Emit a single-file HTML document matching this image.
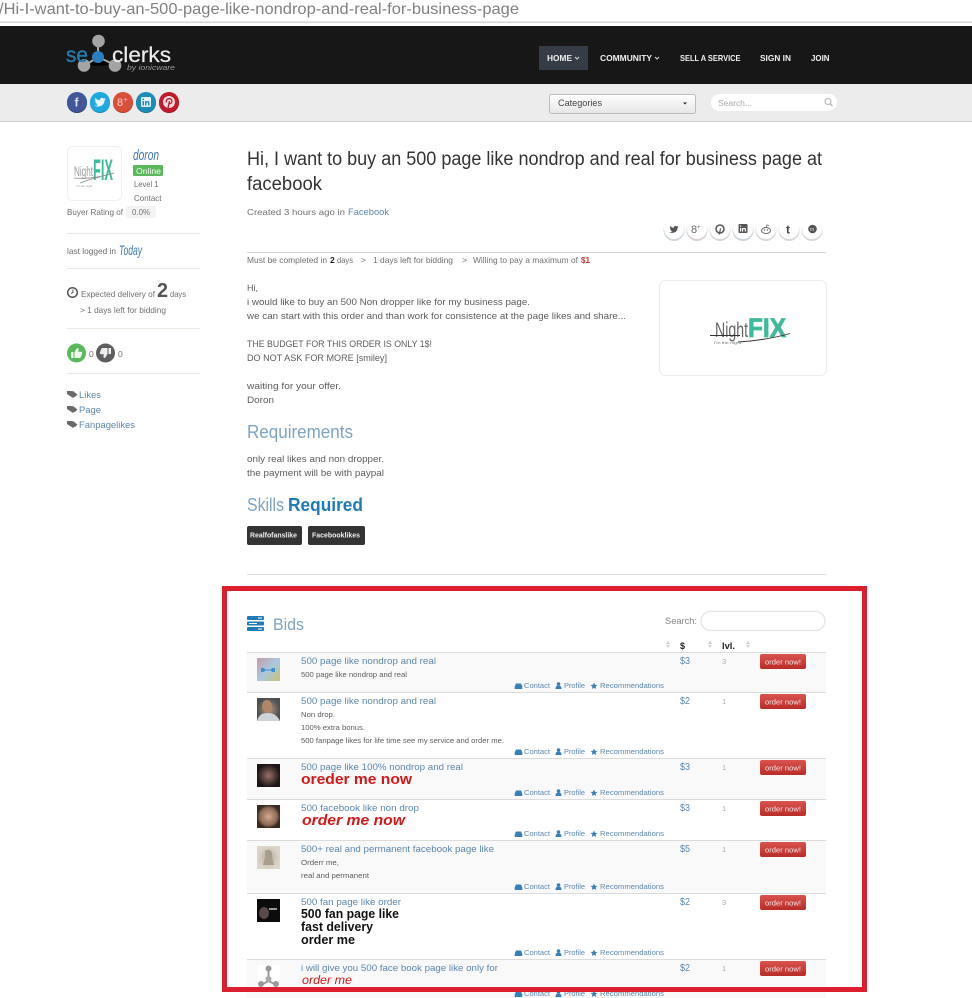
<!DOCTYPE html>
<html lang="en"><head><meta charset="utf-8"><title>Bid request</title>
<style>
html,body{margin:0;padding:0;background:#fff;width:972px;height:998px;overflow:hidden}
svg{display:block;position:absolute;left:0;top:0;filter:blur(.35px)}
text{font-family:"Liberation Sans",sans-serif;white-space:pre}
.b{fill:#5c5c5c;font-size:9.5px}
.s{fill:#707070;font-size:8.5px}
.l{fill:#5d87ad;font-size:9.5px}
.t{fill:#5d87ad;font-size:9.5px}
.d{fill:#5c5c5c;font-size:7.5px}
.k{fill:#5d87ad;font-size:7.5px}
.p{fill:#5d87ad;font-size:10.5px}
.v{fill:#aaa;font-size:7.5px}
.o{fill:#f6e4e4;font-size:7.5px}
.n{fill:#f0f0f0;font-size:8.5px;font-weight:bold}
.h{fill:#7fa3c2;font-size:18px}
.r{fill:#d01818;font-size:14.5px;font-weight:bold}
.m{fill:#111;font-size:12.5px;font-weight:bold}
</style></head><body>
<svg width="972" height="998" viewBox="0 0 972 998" xmlns="http://www.w3.org/2000/svg">
<defs>
<linearGradient id="rb" x1="0" y1="0" x2="0" y2="1"><stop offset="0" stop-color="#d9534f"/><stop offset="1" stop-color="#b92c28"/></linearGradient>
<linearGradient id="cb" x1="0" y1="0" x2="0" y2="1"><stop offset="0" stop-color="#fff"/><stop offset="1" stop-color="#e6e6e6"/></linearGradient>
<linearGradient id="a1" x1="0" y1="0" x2="1" y2="1"><stop offset="0" stop-color="#c99aa8"/><stop offset=".5" stop-color="#a9c8e0"/><stop offset="1" stop-color="#c8c070"/></linearGradient>
<radialGradient id="a2"><stop offset="0" stop-color="#c09a80"/><stop offset="1" stop-color="#4a4f50"/></radialGradient>
<radialGradient id="a3"><stop offset="0" stop-color="#9a7068"/><stop offset="1" stop-color="#1c1516"/></radialGradient>
<radialGradient id="a4"><stop offset="0" stop-color="#d8a890"/><stop offset=".75" stop-color="#8a6a55"/><stop offset="1" stop-color="#3a2a20"/></radialGradient>
<radialGradient id="a5"><stop offset="0" stop-color="#b8ad9c"/><stop offset="1" stop-color="#dcd6ca"/></radialGradient>
<g id="btn"><rect width="46" height="15" rx="2" fill="url(#rb)"/><text class="o" x="5" y="10.5" textLength="36" lengthAdjust="spacingAndGlyphs">order now!</text></g>
<g id="ic">
<path d="M516 -4.5h5l1.300 3v2.500h-7.600v-2.500z" fill="#3a7fb5"/>
<circle cx="558.500" cy="-4" r="1.800" fill="#3a7fb5"/><path d="M555.500 1c0-2.800 1.200-3.400 3-3.400s3 .6 3 3.400z" fill="#3a7fb5"/>
<path d="M594 -5.500l1 2.200 2.400.3-1.800 1.600.5 2.400-2.100-1.200-2.100 1.200.5-2.400-1.800-1.600 2.400-.3z" fill="#3a7fb5"/>
</g>
<g id="sort" fill="#cfcfcf"><path d="M-2 -1l2-3 2 3z"/><path d="M-2 0l2 3 2-3z"/></g>
<g id="tag" fill="#6a6a6a"><path d="M0 -3.500h4.500l5 3.500-3.500 3.500-6-4z"/><path d="M6 -3.500l4.500 3.500-2.500 2.500-1.500-.5 2-2-3.500-3.500z"/></g>
</defs>

<rect width="972" height="998" fill="#fff"/>
<!-- address bar -->
<text x="-1" y="14" fill="#808080" font-size="16" textLength="520" lengthAdjust="spacingAndGlyphs">/Hi-I-want-to-buy-an-500-page-like-nondrop-and-real-for-business-page</text>
<rect y="21.500" width="972" height="1.500" fill="#d6d6d6"/>
<!-- header -->
<rect y="26" width="972" height="58" fill="#171717"/>
<rect y="84" width="972" height="37" fill="#ececec"/>
<rect y="121" width="972" height="1" fill="#cdcdcd"/>
<!-- seoclerks logo -->
<g stroke="#a8a8a8" stroke-width="2"><path d="M98 41V57M84 66L98 57L115 65"/></g>
<circle cx="98.500" cy="41" r="6.300" fill="#a4a4a4"/><circle cx="84" cy="65.500" r="6.300" fill="#a4a4a4"/><circle cx="115" cy="65.500" r="6.300" fill="#a4a4a4"/>
<circle cx="98" cy="57" r="6" fill="#2a7fc0"/>
<text x="66" y="62" fill="#2a79b2" stroke="#2a79b2" stroke-width=".4" font-size="21" textLength="22" lengthAdjust="spacingAndGlyphs">se</text>
<text x="112" y="62" fill="#ececec" stroke="#ececec" stroke-width=".2" font-size="21" textLength="59" lengthAdjust="spacingAndGlyphs">clerks</text>
<text x="127" y="70" fill="#999" font-size="7" font-style="italic" textLength="48" lengthAdjust="spacingAndGlyphs">by ionicware</text>
<!-- nav -->
<rect x="539" y="46" width="49" height="24" fill="#353c45"/>
<text class="n" x="547" y="61" textLength="25" lengthAdjust="spacingAndGlyphs">HOME</text>
<path d="M575 57l2 2 2-2" fill="none" stroke="#ddd"/>
<text class="n" x="600" y="61" textLength="52" lengthAdjust="spacingAndGlyphs">COMMUNITY</text>
<path d="M655 57l2 2 2-2" fill="none" stroke="#ddd"/>
<text class="n" x="680" y="61" textLength="60.500" lengthAdjust="spacingAndGlyphs">SELL A SERVICE</text>
<text class="n" x="760" y="61" textLength="31" lengthAdjust="spacingAndGlyphs">SIGN IN</text>
<text class="n" x="811" y="61" textLength="18.500" lengthAdjust="spacingAndGlyphs">JOIN</text>
<!-- social -->
<g>
<circle cx="77" cy="103" r="10" fill="#2c3f70"/><circle cx="77" cy="102" r="10" fill="#41579a"/>
<circle cx="100" cy="103" r="10" fill="#158ab8"/><circle cx="100" cy="102" r="10" fill="#1fa9df"/>
<circle cx="123" cy="103" r="10" fill="#b03d2c"/><circle cx="123" cy="102" r="10" fill="#d9503a"/>
<circle cx="146" cy="103" r="10" fill="#146f90"/><circle cx="146" cy="102" r="10" fill="#1d8db5"/>
<circle cx="169" cy="103" r="10" fill="#9a1320"/><circle cx="169" cy="102" r="10" fill="#c31a2a"/>
</g>
<text x="74.500" y="106.500" fill="#dfe5f2" font-size="12" font-weight="bold">f</text>
<path d="M94 105.500c4 2.500 10.500.5 10.500-5l1.500-1.500-1.700.3.900-1.500-1.600.8c-1.500-1.500-4-.4-3.500 1.700-2 0-3.500-1-4.700-2.300-.6 1.200-.3 2.500.7 3.200l-1-.2c0 1.200.8 2 2 2.400h-1c.3.900 1.100 1.500 2.200 1.500-1 .7-2.200 1-3.300.6z" fill="#eaf6fc"/>
<text x="117" y="106" fill="#f3d4ce" font-size="11" font-family="Liberation Serif">8</text><text x="123.500" y="102" fill="#f3d4ce" font-size="7">+</text>
<rect x="141" y="97" width="10" height="10" rx="1.500" fill="#e4f1f6"/><path d="M142.500 101h1.500v4.500h-1.500zM142.500 98.500h1.500v1.500h-1.500zM145 101h1.400v.7c.8-1.200 3.100-1 3.100 1.200v2.600H148v-2.300c0-1.300-1.500-1.200-1.500 0v2.300H145z" fill="#1d8db5"/>
<circle cx="169" cy="102" r="6" fill="#f6dfe1"/><path d="M168 108l1.500-7M166.500 102.500c-1-2.500 1-4 3-3.800 2.300.2 3 2.300 2 4-.8 1.300-2.500 1.200-2.800.3" fill="none" stroke="#c31a2a" stroke-width="1.300"/>
<!-- categories + search -->
<rect x="549.500" y="94.500" width="146" height="19" rx="2" fill="url(#cb)" stroke="#bdbdbd"/>
<text x="558" y="106" fill="#444" font-size="9.500" textLength="44" lengthAdjust="spacingAndGlyphs">Categories</text>
<path d="M683 102.500h4l-2 2z" fill="#222"/>
<rect x="711" y="94" width="126" height="17" rx="8.500" fill="#fff"/>
<text x="718" y="106" fill="#aaa" font-size="8.500" textLength="34" lengthAdjust="spacingAndGlyphs">Search...</text>
<circle cx="828" cy="101.500" r="3" fill="none" stroke="#b5b5b5" stroke-width="1.100"/><path d="M830.200 103.700l2.300 2.300" stroke="#b5b5b5" stroke-width="1.300"/>

<!-- sidebar -->
<rect x="67.500" y="146.500" width="54" height="54" rx="5" fill="#fff" stroke="#f0f0f0"/>
<text x="74" y="176" fill="#9a9a9a" font-size="14" font-family="Liberation Serif" textLength="19" lengthAdjust="spacingAndGlyphs">Night</text>
<text x="93" y="180" fill="#3dbb9b" font-size="30" font-weight="bold" textLength="20" lengthAdjust="spacingAndGlyphs">FIX</text>
<path d="M74 178c10 1 24 0 40-5M80 183c8-3 14-5 20-6" fill="none" stroke="#888" stroke-width=".8"/>
<text x="76" y="187" fill="#999" font-size="3">I'm the night</text>
<text x="133" y="160" fill="#3f78ad" font-size="15" font-family="Liberation Serif" font-style="italic" textLength="26" lengthAdjust="spacingAndGlyphs">doron</text>
<rect x="133" y="165" width="30" height="11" rx="1.500" fill="#5cb85c"/>
<text x="136" y="174" fill="#f2fbf2" font-size="8.500" textLength="25" lengthAdjust="spacingAndGlyphs">Online</text>
<text class="s" x="134" y="187" textLength="24.500" lengthAdjust="spacingAndGlyphs">Level 1</text>
<text class="s" x="134" y="201" textLength="27.500" lengthAdjust="spacingAndGlyphs">Contact</text>
<text class="s" x="67" y="215" textLength="56" lengthAdjust="spacingAndGlyphs">Buyer Rating of</text>
<rect x="126" y="206" width="30" height="12" rx="3" fill="#f3f3f3"/>
<text class="s" x="132" y="215" textLength="18" lengthAdjust="spacingAndGlyphs">0.0%</text>
<rect x="67" y="233" width="133" height="1" fill="#eae8e0"/>
<text class="s" x="67" y="254" textLength="49" lengthAdjust="spacingAndGlyphs">last logged in</text>
<text x="119" y="255" fill="#3f78ad" font-size="14" font-family="Liberation Serif" font-style="italic" textLength="23" lengthAdjust="spacingAndGlyphs">Today</text>
<rect x="67" y="268" width="133" height="1" fill="#eae8e0"/>
<circle cx="72.500" cy="292.500" r="4.800" fill="none" stroke="#555" stroke-width="1.500"/><path d="M73 289.500v3l-2 1" fill="none" stroke="#555"/>
<text class="s" x="81" y="297" textLength="74" lengthAdjust="spacingAndGlyphs">Expected delivery of</text>
<text x="157" y="297" fill="#555" font-size="20" font-weight="bold" textLength="11" lengthAdjust="spacingAndGlyphs">2</text>
<text class="s" x="170" y="297" textLength="16" lengthAdjust="spacingAndGlyphs">days</text>
<text class="s" x="80" y="313" textLength="86" lengthAdjust="spacingAndGlyphs">&gt; 1 days left for bidding</text>
<rect x="67" y="328" width="133" height="1" fill="#eae8e0"/>
<circle cx="76.500" cy="353" r="9.500" fill="#5cb85c"/>
<path d="M71 352h2.500v6H71zM74.500 352l2.500-4c1.300 0 1.800 1 1.500 2.500l-.4 1.300h3c1 0 1.300 1 .9 1.800l-1.200 3.400c-.2.600-.7 1-1.400 1h-4.900z" fill="#eef8ee"/>
<text class="s" x="89" y="357">0</text>
<circle cx="105.500" cy="353" r="9.500" fill="#5e5e60"/>
<path d="M111 354h-2.500v-6H111zM107.500 354l-2.500 4c-1.300 0-1.800-1-1.500-2.500l.4-1.300h-3c-1 0-1.300-1-.9-1.800l1.200-3.400c.2-.6.700-1 1.400-1h4.900z" fill="#eee"/>
<text class="s" x="118" y="357">0</text>
<rect x="67" y="373" width="133" height="1" fill="#eae8e0"/>
<use href="#tag" x="67" y="394.500"/><use href="#tag" x="67" y="409.500"/><use href="#tag" x="67" y="424.500"/>
<text class="l" x="79" y="398" textLength="22" lengthAdjust="spacingAndGlyphs">Likes</text>
<text class="l" x="79" y="413" textLength="22" lengthAdjust="spacingAndGlyphs">Page</text>
<text class="l" x="79" y="428" textLength="56" lengthAdjust="spacingAndGlyphs">Fanpagelikes</text>

<!-- main title -->
<text x="247" y="165" fill="#333" font-size="19" textLength="575" lengthAdjust="spacingAndGlyphs">Hi, I want to buy an 500 page like nondrop and real for business page at</text>
<text x="247" y="190" fill="#333" font-size="19" textLength="75" lengthAdjust="spacingAndGlyphs">facebook</text>
<text class="s" x="247" y="215" font-size="9" textLength="98" lengthAdjust="spacingAndGlyphs">Created 3 hours ago in</text>
<text class="l" x="348" y="215" textLength="41" lengthAdjust="spacingAndGlyphs">Facebook</text>
<!-- share -->
<g>
<circle cx="674" cy="230.500" r="10.500" fill="#cfd8dc"/><circle cx="697" cy="230.500" r="10.500" fill="#dccfcf"/><circle cx="720" cy="230.500" r="10.500" fill="#d8d8d8"/><circle cx="743" cy="230.500" r="10.500" fill="#c8d6de"/><circle cx="766" cy="230.500" r="10.500" fill="#d8d8d8"/><circle cx="789" cy="230.500" r="10.500" fill="#d8d8d8"/><circle cx="812" cy="230.500" r="10.500" fill="#d8d8d8"/>
<g fill="#fff"><circle cx="674" cy="229" r="10"/><circle cx="697" cy="229" r="10"/><circle cx="720" cy="229" r="10"/><circle cx="743" cy="229" r="10"/><circle cx="766" cy="229" r="10"/><circle cx="789" cy="229" r="10"/><circle cx="812" cy="229" r="10"/></g>
</g>
<path d="M669 232c3.500 2 8.500.5 8.500-4l1.200-1.200-1.400.2.800-1.200-1.300.6c-1.200-1.200-3.200-.3-2.800 1.400-1.600 0-2.800-.8-3.800-1.800-.5 1-.2 2 .6 2.600l-.8-.2c0 1 .6 1.600 1.600 2h-.8c.2.700.9 1.200 1.800 1.200-.8.500-1.700.7-2.600.4z" fill="#555"/>
<text x="691" y="233" fill="#666" font-size="11" font-family="Liberation Serif">8</text><text x="697" y="229" fill="#666" font-size="6">+</text>
<circle cx="720" cy="229" r="4" fill="none" stroke="#555" stroke-width="1.500"/><path d="M719.300 234.500l1.200-6" stroke="#555" stroke-width="1.200"/>
<rect x="738.500" y="224" width="9" height="9" rx="1" fill="#555"/><path d="M740 228h1.200v3.500H740zM740 225.500h1.200v1.200H740zM742 228h1.200v.5c.8-1 2.800-.8 2.800 1v2h-1.200v-1.800c0-1.100-1.600-1-1.600 0v1.800H742z" fill="#fff"/>
<ellipse cx="766" cy="230.500" rx="4.500" ry="3" fill="none" stroke="#666"/><circle cx="764.500" cy="230" r=".8" fill="#666"/><circle cx="767.500" cy="230" r=".8" fill="#666"/><path d="M766 227.500l1-2.500 2 .5" fill="none" stroke="#666" stroke-width=".8"/>
<text x="786" y="233.500" fill="#444" font-size="12" font-weight="bold">t</text>
<circle cx="812.500" cy="229" r="4.300" fill="#555"/><text x="809.800" y="231" fill="#ddd" font-size="5.500">m</text>
<!-- info line -->
<rect x="247" y="252" width="579" height="1" fill="#d4d4d4"/>
<text class="s" x="247" y="263" textLength="80" lengthAdjust="spacingAndGlyphs">Must be completed in</text>
<text x="330" y="263" fill="#222" font-size="8.500" font-weight="bold">2</text>
<text class="s" x="337" y="263" textLength="16" lengthAdjust="spacingAndGlyphs">days</text>
<text class="s" x="361" y="263">&gt;</text>
<text class="s" x="373" y="263" textLength="80" lengthAdjust="spacingAndGlyphs">1 days left for bidding</text>
<text class="s" x="462" y="263">&gt;</text>
<text class="s" x="473" y="263" textLength="105" lengthAdjust="spacingAndGlyphs">Willing to pay a maximum of</text>
<text x="581" y="263" fill="#c0392b" font-size="8.500" font-weight="bold" textLength="9" lengthAdjust="spacingAndGlyphs">$1</text>
<!-- body -->
<text class="b" x="247" y="291" textLength="11" lengthAdjust="spacingAndGlyphs">Hi,</text>
<text class="b" x="247" y="305" textLength="283" lengthAdjust="spacingAndGlyphs">i would like to buy an 500 Non dropper like for my business page.</text>
<text class="b" x="247" y="319" textLength="379" lengthAdjust="spacingAndGlyphs">we can start with this order and than work for consistence at the page likes and share...</text>
<text class="b" x="247" y="347" textLength="185" lengthAdjust="spacingAndGlyphs">THE BUDGET FOR THIS ORDER IS ONLY 1$!</text>
<text class="b" x="247" y="361" textLength="140" lengthAdjust="spacingAndGlyphs">DO NOT ASK FOR MORE [smiley]</text>
<text class="b" x="247" y="389" textLength="94" lengthAdjust="spacingAndGlyphs">waiting for your offer.</text>
<text class="b" x="247" y="403" textLength="27" lengthAdjust="spacingAndGlyphs">Doron</text>
<!-- image card -->
<rect x="659.500" y="280.500" width="167" height="95" rx="6" fill="#fff" stroke="#ececec"/>
<text x="715" y="337" fill="#666" font-size="21" font-family="Liberation Serif" textLength="33" lengthAdjust="spacingAndGlyphs">Night</text>
<text x="748" y="337" fill="#3dbb9b" stroke="#3dbb9b" stroke-width=".8" font-size="27" font-weight="bold" textLength="38" lengthAdjust="spacingAndGlyphs">FIX</text>
<path d="M710 335.500h30M738 342c18-1 36-4 52-8.500" fill="none" stroke="#333" stroke-width=".9"/>
<text x="714" y="344" fill="#777" font-size="4" textLength="27" lengthAdjust="spacingAndGlyphs">I'm the night</text>
<!-- requirements -->
<text class="h" x="247" y="438" textLength="106" lengthAdjust="spacingAndGlyphs">Requirements</text>
<text class="b" x="247" y="462" textLength="137" lengthAdjust="spacingAndGlyphs">only real likes and non dropper.</text>
<text class="b" x="247" y="476" textLength="137" lengthAdjust="spacingAndGlyphs">the payment will be with paypal</text>
<text class="h" x="247" y="511" textLength="37" lengthAdjust="spacingAndGlyphs">Skills</text>
<text x="288" y="511" fill="#1f7bb5" font-size="18" font-weight="bold" textLength="75" lengthAdjust="spacingAndGlyphs">Required</text>
<rect x="247" y="526" width="55" height="19" rx="2" fill="#333"/>
<text x="250" y="537.500" fill="#eee" font-size="7.500" font-weight="bold" textLength="47" lengthAdjust="spacingAndGlyphs">Realfofanslike</text>
<rect x="308" y="526" width="57" height="19" rx="2" fill="#333"/>
<text x="312" y="537.500" fill="#eee" font-size="7.500" font-weight="bold" textLength="48" lengthAdjust="spacingAndGlyphs">Facebooklikes</text>
<rect x="247" y="574" width="579" height="1" fill="#dddddd"/>

<!-- bids head -->
<g fill="#1f7bb5"><rect x="247" y="616" width="17" height="4" rx="1"/><rect x="247" y="621.500" width="17" height="4" rx="1"/><rect x="247" y="627" width="17" height="4" rx="1"/></g>
<g fill="#fff"><rect x="258" y="617.500" width="4" height="1"/><rect x="249" y="623" width="8" height="1"/><rect x="258" y="628.500" width="4" height="1"/></g>
<text x="273" y="630" fill="#7fa3c2" font-size="17" textLength="31" lengthAdjust="spacingAndGlyphs">Bids</text>
<text x="665" y="624" fill="#888" font-size="9" textLength="32" lengthAdjust="spacingAndGlyphs">Search:</text>
<rect x="701" y="611.500" width="124" height="19" rx="9.500" fill="#fff" stroke="#e5e5e5" stroke-width="1.300"/>
<use href="#sort" x="668" y="645"/><use href="#sort" x="710" y="645"/><use href="#sort" x="748" y="645"/>
<text x="680" y="649" fill="#222" font-size="9" font-weight="bold">$</text>
<text x="722" y="649" fill="#222" font-size="9" font-weight="bold" textLength="13" lengthAdjust="spacingAndGlyphs">lvl.</text>

<!-- row backgrounds -->
<rect x="247" y="652" width="579" height="40" fill="#f9f9f9"/>
<rect x="247" y="758" width="579" height="41" fill="#f9f9f9"/>
<rect x="247" y="840" width="579" height="53" fill="#f9f9f9"/>
<rect x="247" y="959" width="579" height="39" fill="#f9f9f9"/>
<g fill="#dcdcdc"><rect x="247" y="652" width="579" height="1"/><rect x="247" y="692" width="579" height="1"/><rect x="247" y="758" width="579" height="1"/><rect x="247" y="799" width="579" height="1"/><rect x="247" y="840" width="579" height="1"/><rect x="247" y="893" width="579" height="1"/><rect x="247" y="959" width="579" height="1"/></g>

<!-- avatars -->
<rect x="257" y="658" width="23" height="23" fill="url(#a1)"/><path d="M261 668h3l1 1.500h6l1-1.500h3v4h-3l-1-1.500h-6l-1 1.500h-3z" fill="#3d8fd0"/>
<rect x="257" y="698" width="23" height="23" fill="url(#a2)"/><path d="M257 721c2-7 6-8 11-8s9 2 12 8z" fill="#cdd3d6"/><ellipse cx="267" cy="706" rx="5" ry="6" fill="#b08668"/>
<rect x="257" y="764" width="23" height="23" fill="url(#a3)"/>
<rect x="257" y="805" width="23" height="23" fill="url(#a4)"/>
<rect x="257" y="846" width="23" height="23" fill="url(#a5)"/><path d="M265 851c4-3 8 0 7 5l2 9h-11l2-8z" fill="#a89d8e"/>
<rect x="257" y="899" width="23" height="23" fill="#0c0c0c"/><ellipse cx="264" cy="913" rx="5" ry="6" fill="#5a4a4a"/><rect x="269" y="908" width="8" height="2" fill="#999"/>
<rect x="257" y="965" width="23" height="23" fill="#fff"/>
<path d="M268.500 971v10M261 985l7.500-4 8 4" stroke="#999" stroke-width="2" fill="none"/><circle cx="268.500" cy="968.500" r="3" fill="#999"/><circle cx="268.500" cy="979" r="3" fill="#aaa"/><circle cx="261" cy="984" r="3" fill="#999"/><circle cx="276" cy="984" r="3" fill="#999"/>

<!-- row 1 -->
<text class="t" x="301" y="664" textLength="135" lengthAdjust="spacingAndGlyphs">500 page like nondrop and real</text>
<text class="d" x="301" y="677" textLength="106" lengthAdjust="spacingAndGlyphs">500 page like nondrop and real</text>
<use href="#ic" y="688"/>
<text class="k" x="524" y="688" textLength="26" lengthAdjust="spacingAndGlyphs">Contact</text><text class="k" x="564" y="688" textLength="21" lengthAdjust="spacingAndGlyphs">Profile</text><text class="k" x="600" y="688" textLength="64" lengthAdjust="spacingAndGlyphs">Recommendations</text>
<text class="p" x="680" y="664" textLength="10" lengthAdjust="spacingAndGlyphs">$3</text><text class="v" x="722" y="664">3</text>
<use href="#btn" x="760" y="654"/>
<!-- row 2 -->
<text class="t" x="301" y="704" textLength="135" lengthAdjust="spacingAndGlyphs">500 page like nondrop and real</text>
<text class="d" x="301" y="717" textLength="34" lengthAdjust="spacingAndGlyphs">Non drop.</text>
<text class="d" x="301" y="730" textLength="64" lengthAdjust="spacingAndGlyphs">100% extra bonus.</text>
<text class="d" x="301" y="743" textLength="203" lengthAdjust="spacingAndGlyphs">500 fanpage likes for life time see my service and order me.</text>
<use href="#ic" y="754"/>
<text class="k" x="524" y="754" textLength="26" lengthAdjust="spacingAndGlyphs">Contact</text><text class="k" x="564" y="754" textLength="21" lengthAdjust="spacingAndGlyphs">Profile</text><text class="k" x="600" y="754" textLength="64" lengthAdjust="spacingAndGlyphs">Recommendations</text>
<text class="p" x="680" y="704" textLength="10" lengthAdjust="spacingAndGlyphs">$2</text><text class="v" x="722" y="704">1</text>
<use href="#btn" x="760" y="694"/>
<!-- row 3 -->
<text class="t" x="301" y="770" textLength="162" lengthAdjust="spacingAndGlyphs">500 page like 100% nondrop and real</text>
<text class="r" x="301" y="784" textLength="111" lengthAdjust="spacingAndGlyphs">oreder me now</text>
<use href="#ic" y="795"/>
<text class="k" x="524" y="795" textLength="26" lengthAdjust="spacingAndGlyphs">Contact</text><text class="k" x="564" y="795" textLength="21" lengthAdjust="spacingAndGlyphs">Profile</text><text class="k" x="600" y="795" textLength="64" lengthAdjust="spacingAndGlyphs">Recommendations</text>
<text class="p" x="680" y="770" textLength="10" lengthAdjust="spacingAndGlyphs">$3</text><text class="v" x="722" y="770">1</text>
<use href="#btn" x="760" y="760"/>
<!-- row 4 -->
<text class="t" x="301" y="811" textLength="118" lengthAdjust="spacingAndGlyphs">500 facebook like non drop</text>
<text class="r" x="302" y="825" font-style="italic" textLength="103" lengthAdjust="spacingAndGlyphs">order me now</text>
<use href="#ic" y="836"/>
<text class="k" x="524" y="836" textLength="26" lengthAdjust="spacingAndGlyphs">Contact</text><text class="k" x="564" y="836" textLength="21" lengthAdjust="spacingAndGlyphs">Profile</text><text class="k" x="600" y="836" textLength="64" lengthAdjust="spacingAndGlyphs">Recommendations</text>
<text class="p" x="680" y="811" textLength="10" lengthAdjust="spacingAndGlyphs">$3</text><text class="v" x="722" y="811">1</text>
<use href="#btn" x="760" y="801"/>
<!-- row 5 -->
<text class="t" x="301" y="852" textLength="193" lengthAdjust="spacingAndGlyphs">500+ real and permanent facebook page like</text>
<text class="d" x="301" y="865" textLength="38" lengthAdjust="spacingAndGlyphs">Orderr me,</text>
<text class="d" x="301" y="878" textLength="68" lengthAdjust="spacingAndGlyphs">real and permanent</text>
<use href="#ic" y="889"/>
<text class="k" x="524" y="889" textLength="26" lengthAdjust="spacingAndGlyphs">Contact</text><text class="k" x="564" y="889" textLength="21" lengthAdjust="spacingAndGlyphs">Profile</text><text class="k" x="600" y="889" textLength="64" lengthAdjust="spacingAndGlyphs">Recommendations</text>
<text class="p" x="680" y="852" textLength="10" lengthAdjust="spacingAndGlyphs">$5</text><text class="v" x="722" y="852">1</text>
<use href="#btn" x="760" y="842"/>
<!-- row 6 -->
<text class="t" x="301" y="905" textLength="100" lengthAdjust="spacingAndGlyphs">500 fan page like order</text>
<text class="m" x="301" y="918" textLength="98" lengthAdjust="spacingAndGlyphs">500 fan page like</text>
<text class="m" x="301" y="931" textLength="72" lengthAdjust="spacingAndGlyphs">fast delivery</text>
<text class="m" x="301" y="944" textLength="54" lengthAdjust="spacingAndGlyphs">order me</text>
<use href="#ic" y="955"/>
<text class="k" x="524" y="955" textLength="26" lengthAdjust="spacingAndGlyphs">Contact</text><text class="k" x="564" y="955" textLength="21" lengthAdjust="spacingAndGlyphs">Profile</text><text class="k" x="600" y="955" textLength="64" lengthAdjust="spacingAndGlyphs">Recommendations</text>
<text class="p" x="680" y="905" textLength="10" lengthAdjust="spacingAndGlyphs">$2</text><text class="v" x="722" y="905">3</text>
<use href="#btn" x="760" y="895"/>
<!-- row 7 -->
<text class="t" x="301" y="971" textLength="197" lengthAdjust="spacingAndGlyphs">i will give you 500 face book page like only for</text>
<text x="302" y="984" fill="#d01818" font-size="12" font-style="italic" textLength="50" lengthAdjust="spacingAndGlyphs">order me</text>
<use href="#ic" y="996"/>
<text class="k" x="524" y="996" textLength="26" lengthAdjust="spacingAndGlyphs">Contact</text><text class="k" x="564" y="996" textLength="21" lengthAdjust="spacingAndGlyphs">Profile</text><text class="k" x="600" y="996" textLength="64" lengthAdjust="spacingAndGlyphs">Recommendations</text>
<text class="p" x="680" y="971" textLength="10" lengthAdjust="spacingAndGlyphs">$2</text><text class="v" x="722" y="971">1</text>
<use href="#btn" x="760" y="961"/>

<!-- red highlight box -->
<rect x="224.500" y="588.500" width="640" height="401" fill="none" stroke="#dc1f2e" stroke-width="5"/>
</svg>
</body></html>
